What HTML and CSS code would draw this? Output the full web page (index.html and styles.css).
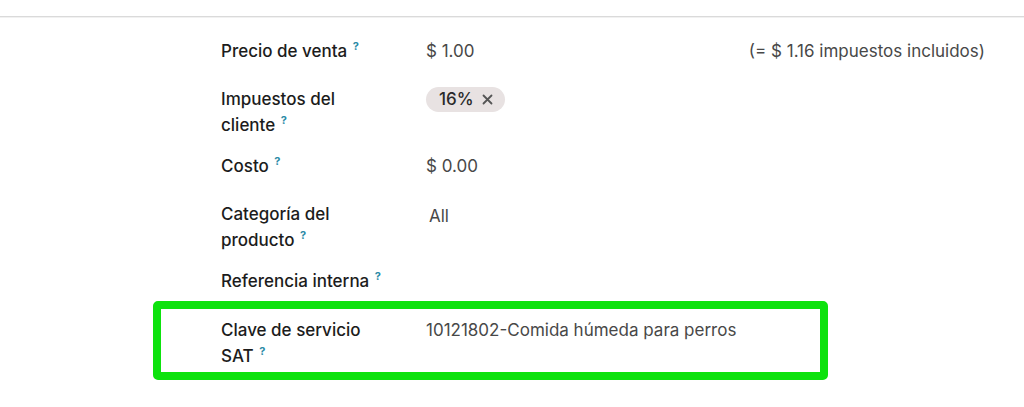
FILE: index.html
```html
<!doctype html>
<html>
<head>
	<meta charset="utf-8" />
	<title>Producto</title>
	<link rel="stylesheet" href="styles.css">
</head>
<body>
	<div class="topbar"></div>

	<main class="sheet">
		<div class="field">
			<label>Precio de venta <sup class="help">?</sup></label>
			<div class="value value-split">
				<span>$ 1.00</span>
				<span class="taxes-note">(= $ 1.16 impuestos incluidos)</span>
			</div>
		</div>

		<div class="field">
			<label>Impuestos del cliente <sup class="help">?</sup></label>
			<div class="value">
				<span class="tag">16%
					<svg class="tag-remove" width="11" height="11" viewBox="0 0 11 11"><path d="M1.5 1.5l8 8M9.5 1.5l-8 8" stroke="#555" stroke-width="1.8" stroke-linecap="round"/></svg>
				</span>
			</div>
		</div>

		<div class="field field-gap">
			<label>Costo <sup class="help">?</sup></label>
			<div class="value">$ 0.00</div>
		</div>

		<div class="field">
			<label>Categoría del producto <sup class="help">?</sup></label>
			<div class="value value-pad">All</div>
		</div>

		<div class="field field-gap">
			<label>Referencia interna <sup class="help">?</sup></label>
			<div class="value"></div>
		</div>

		<!-- the one we care about -->
		<div class="field highlight">
			<label>Clave de servicio SAT <sup class="help">?</sup></label>
			<div class="value">10121802-Comida húmeda para perros</div>
		</div>
	</main>
</body>
</html>
```

FILE: styles.css
```css
html, body {
	margin: 0;
	background: #fff;
	font-family: Inter, "Noto Sans", sans-serif;
	font-size: 17px;
	color: #1f1f1f;
}

.topbar {
	height: 16px;
	border-bottom: 1px solid #dadada;
	box-shadow: 0 1px #f1f1f1;
}

.sheet {
	padding-top: 21px;
	padding-left: 221px;
	padding-right: 39px;
}

.field {
	display: grid;
	grid-template-columns: 205px 1fr;
	min-height: 34px;
	margin-bottom: 14px;
	line-height: 26px;
}

.field-gap {
	padding-top: 1px;
}

.field label {
	font-weight: 500;
	color: #1c1c1c;
	padding-right: 38px;
}

.help {
	display: inline-block;
	font-size: 11px;
	font-weight: 700;
	color: #2b8ba6;
	line-height: 11px;
	vertical-align: 7px;
	margin-left: 1px;
}

.value {
	color: #484848;
}

.value-split {
	display: flex;
	justify-content: space-between;
}

.value-pad {
	padding-left: 3px;
	padding-top: 2px;
}

.tag {
	display: inline-flex;
	align-items: center;
	gap: 8px;
	height: 25px;
	padding: 0 12px 0 13px;
	border-radius: 13px;
	background: #e8e2e2;
	color: #2a2a2a;
	font-weight: 500;
	line-height: 25px;
}

.highlight {
	box-sizing: border-box;
	width: 675px;
	margin-left: -68px;
	margin-top: -15px;
	padding: 8px 0 3px 60px;
	border: 8px solid #0de20d;
	border-radius: 5px;
	grid-template-columns: 205px 1fr;
}
```
